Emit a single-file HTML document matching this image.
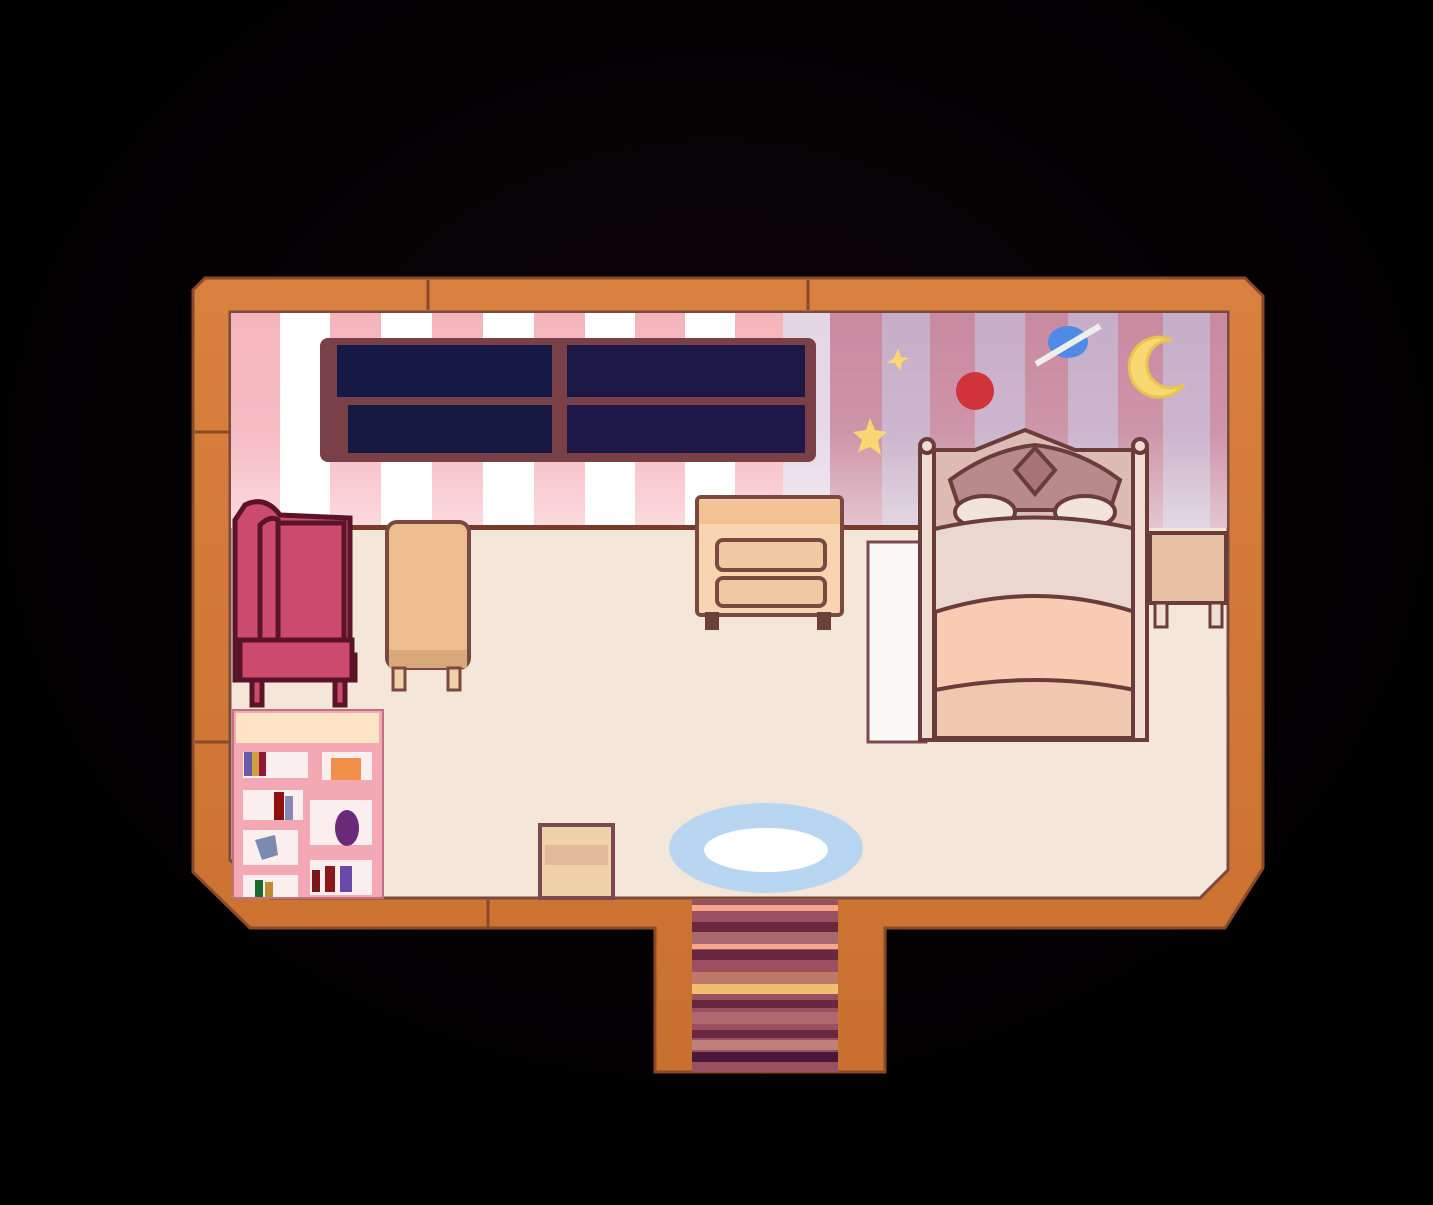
<!DOCTYPE html>
<html><head><meta charset="utf-8"><style>
html,body{margin:0;padding:0;background:#000;}
svg{display:block}
</style></head><body>
<svg width="1433" height="1205" viewBox="0 0 1433 1205" xmlns="http://www.w3.org/2000/svg">
<defs>
<radialGradient id="glow" cx="0.5" cy="0.4" r="0.55">
<stop offset="0" stop-color="#0c0409"/><stop offset="0.7" stop-color="#040103"/><stop offset="1" stop-color="#000"/>
</radialGradient>
<linearGradient id="fade" x1="0" y1="0" x2="0" y2="1">
<stop offset="0" stop-color="#fff" stop-opacity="0"/><stop offset="0.55" stop-color="#fff" stop-opacity="0.15"/><stop offset="1" stop-color="#fff" stop-opacity="0.85"/>
</linearGradient>
<linearGradient id="wood" x1="0" y1="0" x2="0" y2="1">
<stop offset="0" stop-color="#d9803e"/><stop offset="1" stop-color="#c9702f"/>
</linearGradient>
</defs>
<rect width="1433" height="1205" fill="url(#glow)"/>
<path d="M205 278 H1245 L1263 296 V868 L1225 928 H885 V1072 H655 V928 H250 L193 872 V290 Z" fill="url(#wood)" stroke="#8a4a2a" stroke-width="3"/>
<g stroke="#8a4a2a" stroke-width="3">
<line x1="428" y1="280" x2="428" y2="310"/><line x1="808" y1="280" x2="808" y2="310"/>
<line x1="195" y1="432" x2="230" y2="432"/><line x1="195" y1="742" x2="230" y2="742"/>
<line x1="488" y1="900" x2="488" y2="928"/>
</g>
<path d="M230 312 H1228 V870 L1200 898 H270 L230 860 Z" fill="#f4e7d9" stroke="#7a4a40" stroke-width="3"/>
<rect x="231" y="313" width="996" height="215" fill="#fff"/>
<g fill="#f6b5bd">
<rect x="231" y="313" width="49" height="215"/>
<rect x="330" y="313" width="51" height="215"/><rect x="432" y="313" width="51" height="215"/>
<rect x="534" y="313" width="51" height="215"/><rect x="635" y="313" width="50" height="215"/>
<rect x="735" y="313" width="48" height="215"/>
</g>
<g fill="#c7aec8">
<rect x="783" y="313" width="47" height="215" opacity="0.5"/>
<rect x="882" y="313" width="48" height="215"/><rect x="975" y="313" width="50" height="215"/>
<rect x="1068" y="313" width="50" height="215"/><rect x="1163" y="313" width="47" height="215"/>
</g>
<g fill="#c98aa0">
<rect x="830" y="313" width="52" height="215"/><rect x="930" y="313" width="45" height="215"/>
<rect x="1025" y="313" width="43" height="215"/><rect x="1118" y="313" width="45" height="215"/>
<rect x="1210" y="313" width="17" height="215"/>
</g>
<rect x="231" y="313" width="996" height="215" fill="url(#fade)" opacity="0.6"/>
<rect x="350" y="525" width="570" height="5" fill="#7a3a2a"/>
<rect x="320" y="338" width="496" height="124" rx="8" fill="#7a4048"/>
<rect x="337" y="345" width="215" height="52" fill="#141a45"/>
<rect x="567" y="345" width="238" height="52" fill="#1b1845"/>
<rect x="348" y="405" width="204" height="48" fill="#161a42"/>
<rect x="567" y="405" width="238" height="48" fill="#1e1848"/>
<path d="M898 349 L901 357 L909 358 L902 362 L900 371 L895 363 L887 363 L894 358 Z" fill="#f8d870"/>
<path d="M870 418 L875 430 L887 432 L878 440 L881 455 L870 447 L858 452 L862 440 L853 432 L866 430 Z" fill="#f8d870"/>
<circle cx="975" cy="391" r="19" fill="#d0333a"/>
<ellipse cx="1068" cy="342" rx="20" ry="16" fill="#4e8ae6"/>
<line x1="1036" y1="364" x2="1100" y2="326" stroke="#eee" stroke-width="6"/>
<path d="M1172 340 A30 30 0 1 0 1184 384 A24 24 0 1 1 1172 340 Z" fill="#f8d870" stroke="#e9c450" stroke-width="3"/>
<g stroke="#5a1428" stroke-width="5" fill="#cc4a6c">
<path d="M245 505 Q265 495 280 515 L350 518 V655 H355 V680 H345 V705 H335 V680 H262 V705 H252 V680 H235 V520 Z"/>
<path d="M260 525 Q270 515 278 520 V648 H260 Z"/>
<rect x="278" y="523" width="66" height="125"/>
<rect x="240" y="640" width="112" height="40"/>
</g>
<rect x="387" y="522" width="82" height="146" rx="10" fill="#eebe8e" stroke="#7a4a40" stroke-width="4"/>
<rect x="389" y="650" width="78" height="18" fill="#d8a878"/>
<rect x="393" y="668" width="12" height="22" fill="#f2d0a8" stroke="#7a4a40" stroke-width="3"/>
<rect x="448" y="668" width="12" height="22" fill="#f2d0a8" stroke="#7a4a40" stroke-width="3"/>
<rect x="697" y="497" width="145" height="118" rx="4" fill="#f8d4b0" stroke="#7a4a40" stroke-width="4"/>
<rect x="699" y="500" width="141" height="24" fill="#f2c295"/>
<rect x="717" y="540" width="108" height="30" rx="6" fill="#f0c8a4" stroke="#7a4a40" stroke-width="4"/>
<rect x="717" y="578" width="108" height="28" rx="6" fill="#f0c8a4" stroke="#7a4a40" stroke-width="4"/>
<rect x="705" y="612" width="14" height="18" fill="#6a4038"/><rect x="817" y="612" width="14" height="18" fill="#6a4038"/>
<rect x="868" y="542" width="58" height="200" fill="#fbf8f8" stroke="#7a4a50" stroke-width="3"/>
<!-- bed -->
<g stroke="#6a3c3c" stroke-width="4">
<path d="M922 450 L975 450 L1025 430 L1075 450 L1145 450 V740 H922 Z" fill="#dcbcb4"/>
<path d="M950 480 Q990 450 1035 445 Q1080 450 1120 480 L1110 510 H960 Z" fill="#b88a8c"/>
<path d="M1015 470 L1035 448 L1055 470 L1035 494 Z" fill="#a87478"/>
<ellipse cx="985" cy="512" rx="30" ry="16" fill="#f2e4dc"/>
<ellipse cx="1085" cy="512" rx="30" ry="16" fill="#f2e4dc"/>
<path d="M930 530 Q1035 505 1140 530 V612 H930 Z" fill="#ead8d0"/>
<path d="M935 612 Q1035 580 1135 612 V740 H935 Z" fill="#f8cbb2"/>
<path d="M935 690 Q1035 670 1135 690 V738 H935 Z" fill="#f0c8b0"/>
<rect x="920" y="450" width="14" height="290" fill="#f0dcd0"/>
<rect x="1133" y="450" width="14" height="290" fill="#f0dcd0"/>
<circle cx="927" cy="446" r="7" fill="#f0dcd0"/><circle cx="1140" cy="446" r="7" fill="#f0dcd0"/>
</g>
<rect x="1150" y="533" width="76" height="70" fill="#e8c0a4" stroke="#6a3c3c" stroke-width="4"/>
<rect x="1155" y="603" width="12" height="24" fill="#f0dcd0" stroke="#6a3c3c" stroke-width="3"/>
<rect x="1210" y="603" width="12" height="24" fill="#f0dcd0" stroke="#6a3c3c" stroke-width="3"/>
<rect x="233" y="710" width="150" height="188" fill="#f4a8b4" stroke="#c07080" stroke-width="2"/>
<rect x="236" y="713" width="143" height="30" fill="#fde4c4"/>
<g fill="#fbeeee">
<rect x="243" y="752" width="65" height="26"/><rect x="243" y="790" width="60" height="30"/>
<rect x="243" y="830" width="55" height="35"/><rect x="243" y="875" width="55" height="22"/>
<rect x="322" y="752" width="50" height="28"/><rect x="310" y="800" width="62" height="45"/>
<rect x="310" y="860" width="62" height="35"/>
</g>
<rect x="244" y="752" width="8" height="24" fill="#6a5aa8"/><rect x="252" y="752" width="7" height="24" fill="#d0a040"/><rect x="259" y="752" width="7" height="24" fill="#901838"/>
<rect x="331" y="758" width="30" height="22" fill="#f0904a"/>
<rect x="274" y="792" width="10" height="28" fill="#901010"/><rect x="285" y="796" width="8" height="24" fill="#8888b8"/>
<ellipse cx="347" cy="828" rx="12" ry="18" fill="#6a2a78"/>
<path d="M255 840 L275 835 L278 855 L262 860 Z" fill="#7a8ab0"/>
<rect x="312" y="870" width="8" height="22" fill="#7a1818"/><rect x="325" y="866" width="10" height="26" fill="#8a1818"/><rect x="340" y="866" width="12" height="26" fill="#6a4aa8"/>
<rect x="255" y="880" width="8" height="17" fill="#1a6a30"/><rect x="265" y="882" width="8" height="15" fill="#c08a30"/>
<rect x="540" y="825" width="73" height="73" fill="#f0d2a8" stroke="#7a4a50" stroke-width="4"/>
<rect x="545" y="845" width="63" height="20" fill="#d8a890" opacity="0.6"/>
<ellipse cx="766" cy="848" rx="97" ry="45" fill="#b8d6f2"/>
<ellipse cx="766" cy="850" rx="62" ry="22" fill="#ffffff"/>
<rect x="692" y="900" width="146" height="172" fill="#9a5060"/>
<g>
<rect x="692" y="905" width="146" height="6" fill="#f4a888"/>
<rect x="692" y="922" width="146" height="10" fill="#6a2840"/>
<rect x="692" y="932" width="146" height="12" fill="#a86870"/>
<rect x="692" y="944" width="146" height="5" fill="#f4a888"/>
<rect x="692" y="950" width="146" height="10" fill="#6a2840"/>
<rect x="692" y="972" width="146" height="12" fill="#c07868"/>
<rect x="692" y="984" width="146" height="10" fill="#f0c070"/>
<rect x="692" y="1000" width="146" height="8" fill="#6a2840"/>
<rect x="692" y="1012" width="146" height="12" fill="#b06870"/>
<rect x="692" y="1030" width="146" height="8" fill="#6a2840"/>
<rect x="692" y="1040" width="146" height="10" fill="#c08078"/>
<rect x="692" y="1052" width="146" height="10" fill="#4a1838"/>
</g>
</svg>
</body></html>
